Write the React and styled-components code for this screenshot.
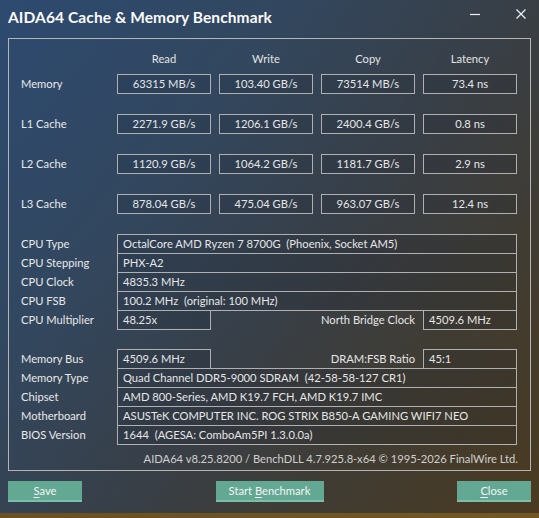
import styled, { createGlobalStyle } from "styled-components"

const GlobalStyle = createGlobalStyle`
html, body {
  margin:0;
  padding:0;
  background:#37404a;
}
body {
  font-family:"Segoe UI",Lato,"Noto Sans",sans-serif;
  font-size:11.2px;
  color:#e6e6e6;
}
`

const bench = [
   { name: "Memory", values: ["63315 MB/s", "103.40 GB/s", "73514 MB/s", "73.4 ns"] },
   { name: "L1 Cache", values: ["2271.9 GB/s", "1206.1 GB/s", "2400.4 GB/s", "0.8 ns"] },
   { name: "L2 Cache", values: ["1120.9 GB/s", "1064.2 GB/s", "1181.7 GB/s", "2.9 ns"] },
   { name: "L3 Cache", values: ["878.04 GB/s", "475.04 GB/s", "963.07 GB/s", "12.4 ns"] },
]

const cpuInfo = [
   { label: "CPU Type", value: "OctalCore AMD Ryzen 7 8700G  (Phoenix, Socket AM5)" },
   { label: "CPU Stepping", value: "PHX-A2" },
   { label: "CPU Clock", value: "4835.3 MHz" },
   { label: "CPU FSB", value: "100.2 MHz  (original: 100 MHz)" },
]

const boardInfo = [
   { label: "Memory Type", value: "Quad Channel DDR5-9000 SDRAM  (42-58-58-127 CR1)" },
   { label: "Chipset", value: "AMD 800-Series, AMD K19.7 FCH, AMD K19.7 IMC" },
   { label: "Motherboard", value: "ASUSTeK COMPUTER INC. ROG STRIX B850-A GAMING WIFI7 NEO" },
   { label: "BIOS Version", value: "1644  (AGESA: ComboAm5PI 1.3.0.0a)" },
]

const App = () => {
   return (
      <Window>
         <GlobalStyle />
         <TitleBar>
            <Title>AIDA64 Cache &amp; Memory Benchmark</Title>
            <Controls>
               <svg width="12" height="12" viewBox="0 0 12 12">
                  <path d="M1 6.5h10" stroke="#f0f0f0" strokeWidth="1.2" />
               </svg>
               <svg width="12" height="12" viewBox="0 0 12 12">
                  <path d="M1.5 1.5l9 9M10.5 1.5l-9 9" stroke="#f0f0f0" strokeWidth="1.2" />
               </svg>
            </Controls>
         </TitleBar>
         <Panel>
            <BenchGrid>
               <span />
               {["Read", "Write", "Copy", "Latency"].map((h) => (
                  <Head key={h}>{h}</Head>
               ))}
               {bench.map((row) => (
                  <BenchRow key={row.name}>
                     <Label>{row.name}</Label>
                     {row.values.map((v, i) => (
                        <Cell key={i}>{v}</Cell>
                     ))}
                  </BenchRow>
               ))}
            </BenchGrid>

            <Group>
               {cpuInfo.map((r) => (
                  <InfoRow key={r.label}>
                     <Label>{r.label}</Label>
                     <Value>{r.value}</Value>
                  </InfoRow>
               ))}
               <SplitRow>
                  <Label>CPU Multiplier</Label>
                  <Value>48.25x</Value>
                  <SideLabel>North Bridge Clock</SideLabel>
                  <Value>4509.6 MHz</Value>
               </SplitRow>
            </Group>

            <Group>
               <SplitRow>
                  <Label>Memory Bus</Label>
                  <Value>4509.6 MHz</Value>
                  <SideLabel>DRAM:FSB Ratio</SideLabel>
                  <Value>45:1</Value>
               </SplitRow>
               {boardInfo.map((r) => (
                  <InfoRow key={r.label}>
                     <Label>{r.label}</Label>
                     <Value>{r.value}</Value>
                  </InfoRow>
               ))}
            </Group>

            <Footer>AIDA64 v8.25.8200 / BenchDLL 4.7.925.8-x64 © 1995-2026 FinalWire Ltd.</Footer>
         </Panel>
         <Buttons>
            <Button $w={74}><u>S</u>ave</Button>
            <Button $w={108}>Start <u>B</u>enchmark</Button>
            <Button $w={74}><u>C</u>lose</Button>
         </Buttons>
         <Strip />
      </Window>
   )
}

const Window = styled.div`
width:539px;
height:518px;
display:flex;
flex-direction:column;
background:linear-gradient(128deg, #2d4a70 0%, #32475f 30%, #383f47 55%, #403c33 75%, #4b3a20 100%);
overflow:hidden;
`
const TitleBar = styled.div`
height:38px;
display:flex;
align-items:center;
justify-content:space-between;
padding:0 12px 4px 8px;
box-sizing:border-box;
`
const Title = styled.div`
font-size:15.5px;
font-weight:700;
color:#fafafa;
letter-spacing:0.1px;
`
const Controls = styled.div`
display:flex;
gap:34px;
align-items:center;
margin-top:-6px;
`
const Panel = styled.div`
margin:0 8px;
height:433px;
box-sizing:border-box;
border:1px solid #b4b4b4;
padding:12px 0 0 12px;
display:flex;
flex-direction:column;
`
const BenchGrid = styled.div`
display:grid;
grid-template-columns:88px repeat(4, 94px);
column-gap:8px;
row-gap:20px;
`
const BenchRow = styled.div`
display:contents;
`
const Head = styled.div`
text-align:center;
line-height:16px;
height:16px;
margin-bottom:-13px;
color:#e4e4e4;
`
const Label = styled.div`
line-height:19px;
white-space:nowrap;
color:#e8e8e8;
`
const Cell = styled.div`
height:20px;
box-sizing:border-box;
border:1px solid #b0b0b0;
background:rgba(20,30,40,0.15);
text-align:center;
line-height:18px;
`
const Group = styled.div`
margin-top:20px;
display:flex;
flex-direction:column;
& + & {
  margin-top:19px;
}
& > * + * {
  margin-top:-1px;
}
`
const InfoRow = styled.div`
display:grid;
grid-template-columns:96px 400px;
height:20px;
`
const SplitRow = styled.div`
display:grid;
grid-template-columns:96px 94px 212px 94px;
height:20px;
`
const Value = styled.div`
border:1px solid #b0b0b0;
background:rgba(20,30,40,0.15);
box-sizing:border-box;
line-height:18px;
padding-left:5px;
white-space:pre;
overflow:hidden;
`
const SideLabel = styled.div`
text-align:right;
padding-right:8px;
line-height:19px;
`
const Footer = styled.div`
margin-top:auto;
padding:0 12px 3px 0;
text-align:right;
color:#cfcfcf;
line-height:16px;
`
const Buttons = styled.div`
display:flex;
justify-content:space-between;
padding:0 8px;
margin-top:10px;
`
const Button = styled.div`
width:${(p) => p.$w}px;
height:21px;
box-sizing:border-box;
background:#63a893;
border-bottom:2px solid #79bfa9;
color:#f4f4f4;
text-align:center;
line-height:19px;
& u {
  text-decoration-thickness:1px;
  text-underline-offset:2px;
}
`
const Strip = styled.div`
margin-top:auto;
height:5px;
background:linear-gradient(90deg, #6a5022, #735826);
`

export default App
